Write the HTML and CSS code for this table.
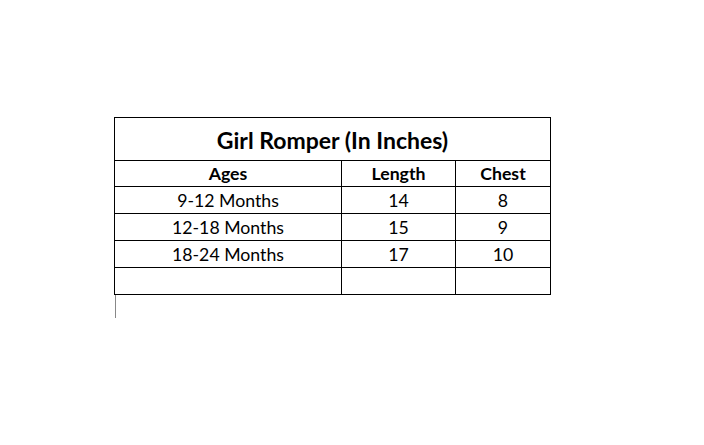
FILE: index.html
```html
<!DOCTYPE html>
<html>
<head>
<meta charset="utf-8">
<link rel="stylesheet" href="styles.css">
</head>
<body>
<div class="page">
  <table class="size-table">
    <colgroup>
      <col class="c1">
      <col class="c2">
      <col class="c3">
    </colgroup>
    <tr class="title-row"><td colspan="3" class="title">Girl Romper (In Inches)</td></tr>
    <tr class="head-row"><th>Ages</th><th>Length</th><th>Chest</th></tr>
    <tr class="row"><td>9-12 Months</td><td>14</td><td>8</td></tr>
    <tr class="row"><td>12-18 Months</td><td>15</td><td>9</td></tr>
    <tr class="row"><td>18-24 Months</td><td>17</td><td>10</td></tr>
    <tr class="row"><td></td><td></td><td></td></tr>
  </table>
  <div class="cursor"></div>
</div>
</body>
</html>
```
FILE: styles.css
```css
html, body {
  margin: 0;
  padding: 0;
  background: #fff;
}
.page {
  padding: 117px 0 0 114px;
  font-family: "Lato", "Open Sans", sans-serif;
  color: #000;
}
.size-table {
  border-collapse: collapse;
  width: 436px;
  table-layout: fixed;
}
.size-table td, .size-table th {
  border: 1px solid #000;
  padding: 1px 0 0 0;
  text-align: center;
  vertical-align: middle;
  font-size: 17.7px;
  line-height: 20px;
}
.size-table th {
  font-weight: bold;
}
.c1 { width: 227px; }
.c2 { width: 114px; }
.c3 { width: 95px; }
.title-row { height: 43px; }
.size-table .title {
  font-size: 23px;
  font-weight: bold;
}
.head-row { height: 26px; }
.row { height: 27px; }
.cursor {
  width: 1px;
  height: 23px;
  margin-left: 1px;
  background: #888;
}
```
